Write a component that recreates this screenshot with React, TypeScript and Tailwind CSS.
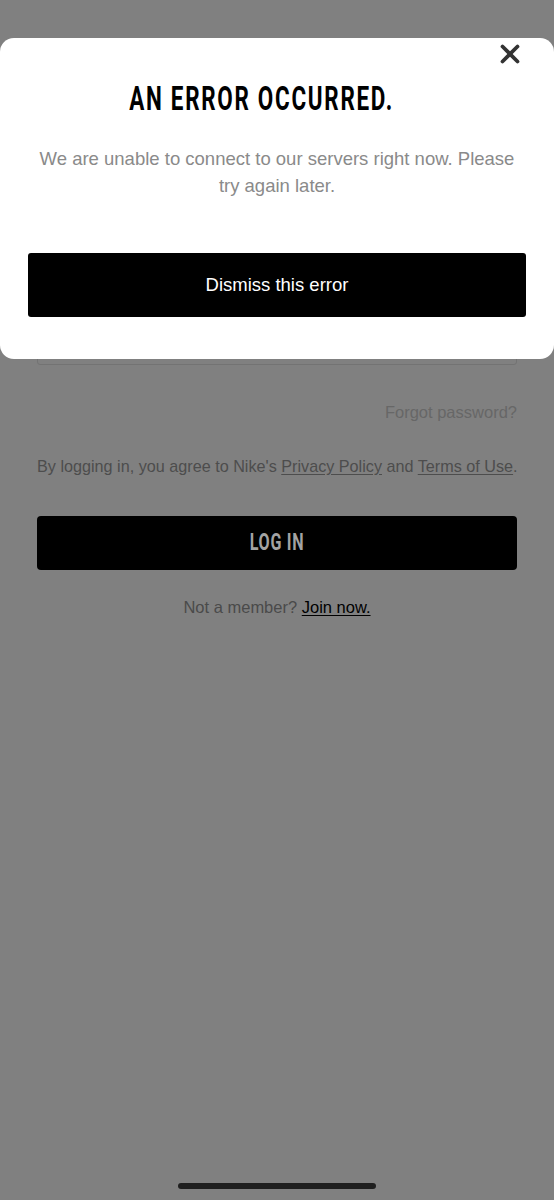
import { X } from "lucide-react";

const condensed = "inline-block origin-center font-['Roboto',sans-serif] font-bold";

export default function App() {
  return (
    <div className="relative min-h-[1200px] bg-[#808080] font-['Liberation_Sans',Arial,sans-serif]">
      {/* login page behind the dim */}
      <div className="flex flex-col px-[37px] pt-[249px]">
        <div className="flex flex-col gap-3">
          <div className="h-[52px] rounded-[3px] border border-[#737373]" />
          <div className="h-[52px] rounded-[3px] border border-[#737373]" />
        </div>
        <p className="mt-[37px] text-right text-[16.5px] leading-5 text-[#676767]">
          Forgot password?
        </p>
        <p className="mt-[34px] whitespace-nowrap text-center text-[16.2px] leading-5 text-[#4d4d4d]">
          By logging in, you agree to Nike's{" "}
          <span className="underline underline-offset-2">Privacy Policy</span> and{" "}
          <span className="underline underline-offset-2">Terms of Use</span>.
        </p>
        <button className="mt-[40px] flex h-[54px] items-center justify-center rounded-[4px] bg-black text-[#a3a3a3]">
          <span className={`${condensed} scale-x-[0.7] text-[23px] tracking-[1px]`}>LOG IN</span>
        </button>
        <p className="mt-[27px] text-center text-[16.5px] leading-5 text-[#4a4a4a]">
          Not a member?{" "}
          <span className="text-black underline underline-offset-2">Join now.</span>
        </p>
      </div>

      {/* error modal */}
      <div className="absolute left-0 right-0 top-[38px] h-[321px] rounded-[14px] bg-white px-[28px] pt-[45px]">
        <button className="absolute right-[29px] top-[1px] text-[#333]">
          <X size={30} strokeWidth={3} />
        </button>
        <h2 className="pr-[31px] text-center leading-8 text-black">
          <span className={`${condensed} scale-x-[0.68] text-[33px] tracking-[2.5px]`}>
            AN ERROR OCCURRED.
          </span>
        </h2>
        <p className="mx-auto mt-[24px] w-[490px] text-center text-[18.5px] leading-[27px] text-[#8a8a8a]">
          We are unable to connect to our servers right now. Please try again later.
        </p>
        <button className="mt-[54px] flex h-[64px] w-full items-center justify-center rounded-[3px] bg-black text-[18.5px] text-white">
          Dismiss this error
        </button>
      </div>

      {/* home indicator */}
      <div className="absolute bottom-[11px] left-[178px] h-[6px] w-[198px] rounded-full bg-[#1f1f1f]" />
    </div>
  );
}
